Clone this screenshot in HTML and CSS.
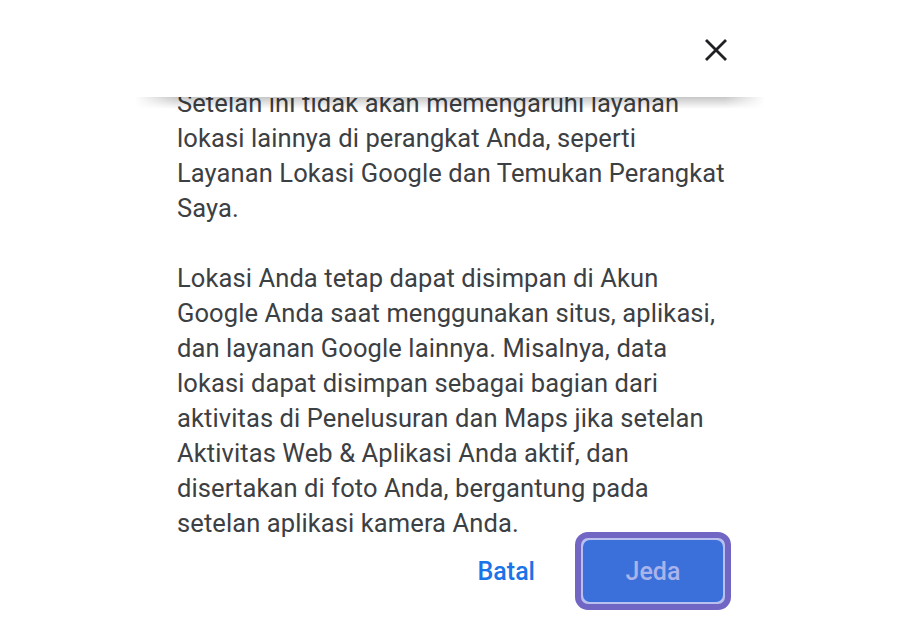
FILE: index.html
```html
<!DOCTYPE html>
<html lang="id">
<head>
<meta charset="utf-8">
<link rel="stylesheet" href="styles.css">
</head>
<body>
<div class="dialog">
  <div class="header">
    <button class="close" aria-label="Tutup">
      <svg width="24" height="24" viewBox="0 0 24 24"><path d="M2 2 L22 22 M22 2 L2 22" stroke="#202124" stroke-width="2.8" fill="none"/></svg>
    </button>
  </div>
  <div class="scroll">
    <div class="shadow"></div>
    <div class="content">
      <p>Setelan ini tidak akan memengaruhi layanan lokasi lainnya di perangkat Anda, seperti Layanan Lokasi Google dan Temukan Perangkat Saya.</p>
      <p>Lokasi Anda tetap dapat disimpan di Akun Google Anda saat menggunakan situs, aplikasi, dan layanan Google lainnya. Misalnya, data lokasi dapat disimpan sebagai bagian dari aktivitas di Penelusuran dan Maps jika setelan Aktivitas Web &amp; Aplikasi Anda aktif, dan disertakan di foto Anda, bergantung pada setelan aplikasi kamera Anda.</p>
    </div>
  </div>
  <div class="actions">
    <button class="btn-text">Batal</button>
    <div class="ring"><button class="btn-fill">Jeda</button></div>
  </div>
</div>
</body>
</html>
```
FILE: styles.css
```css
html, body {
  margin: 0;
  padding: 0;
  background: #ffffff;
}
body {
  font-family: Roboto, "Noto Sans", sans-serif;
  width: 900px;
  height: 632px;
  overflow: hidden;
}
.dialog {
  width: 630px;
  margin: 0 auto;
}
.header {
  height: 97px;
  display: flex;
  justify-content: flex-end;
  align-items: flex-start;
  padding-right: 37px;
}
.close {
  margin-top: 38px;
  width: 24px;
  height: 24px;
  padding: 0;
  border: 0;
  background: none;
  display: block;
}
.close svg { display: block; }
.scroll {
  position: relative;
  height: 445px;
  overflow: hidden;
  padding: 0 28px 0 42px;
}
.shadow {
  position: absolute;
  top: 0;
  left: 0;
  right: 0;
  height: 12px;
  background: linear-gradient(to bottom, rgba(0,0,0,0.22), rgba(0,0,0,0));
  -webkit-mask-image: linear-gradient(to right, transparent 0, #000 40px, #000 calc(100% - 40px), transparent 100%);
  mask-image: linear-gradient(to right, transparent 0, #000 40px, #000 calc(100% - 40px), transparent 100%);
  z-index: 2;
}
.content {
  margin-top: -11px;
  color: #3c4043;
  font-size: 25.5px;
  line-height: 35px;
  letter-spacing: 0.1px;
}
.content p {
  margin: 0 0 35px 0;
}
.actions {
  position: relative;
  margin-top: -10px;
  display: flex;
  justify-content: flex-end;
  align-items: center;
  padding-right: 34px;
  gap: 40px;
}
.btn-text {
  border: 0;
  background: none;
  font-family: Roboto, sans-serif;
  font-weight: 500;
  font-size: 25px;
  color: #1a73e8;
  padding: 0;
}
.ring {
  border: 6px solid #7166c3;
  border-radius: 13px;
  background: #b9c0ef;
  padding: 2px;
}
.btn-fill {
  display: block;
  width: 140px;
  height: 62px;
  border: 0;
  border-radius: 7px;
  background: #3b6fd9;
  color: #aab4ea;
  font-family: Roboto, sans-serif;
  font-weight: 500;
  font-size: 25px;
}
```
